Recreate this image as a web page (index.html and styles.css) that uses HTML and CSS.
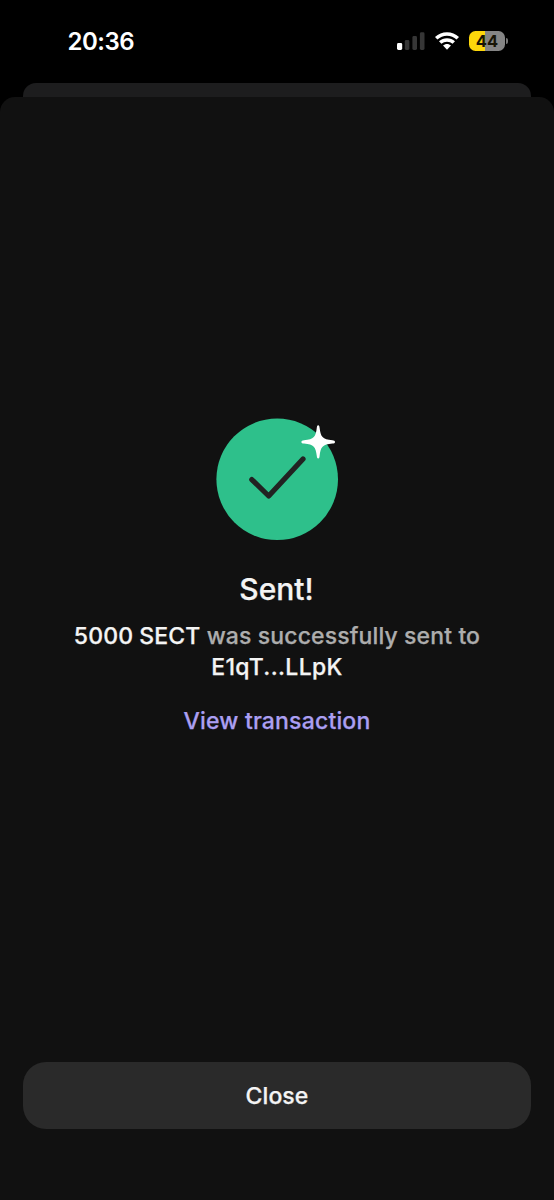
FILE: index.html
```html
<!DOCTYPE html>
<html lang="en">
<head>
<meta charset="utf-8">
<title>Sent</title>
<link rel="stylesheet" href="styles.css">
</head>
<body>
<div class="screen">
  <header class="status">
    <span class="time">20:36</span>
    <div class="indicators">
      <svg class="signal" width="28" height="18" viewBox="0 0 28 18">
        <rect x="0" y="11" width="5.2" height="7" rx="1.4" fill="#fff"/>
        <rect x="7.8" y="8" width="4.6" height="10" rx="1.4" fill="#363636"/>
        <rect x="15.4" y="4" width="4.6" height="14" rx="1.4" fill="#363636"/>
        <rect x="22.9" y="0.3" width="4.6" height="17.7" rx="1.4" fill="#363636"/>
      </svg>
      <svg class="wifi" width="24" height="18" viewBox="0 0 24 18">
        <g fill="none" stroke="#fff" stroke-width="3.5">
          <path d="M1.2 6.3C7.3 0.4 16.7 0.4 22.8 6.3"/>
          <path d="M5.2 10.6C9 7 15 7 18.8 10.6"/>
        </g>
        <path d="M8 13.6C10.3 11.5 13.7 11.5 16 13.6L12 17.8Z" fill="#fff"/>
      </svg>
      <div class="battery"><span class="level">44</span><i class="cap"></i></div>
    </div>
  </header>
  <div class="back-sheet"></div>
  <main class="sheet">
    <svg class="success" width="124" height="124" viewBox="0 0 124 124">
      <circle cx="62.2" cy="62.3" r="60.8" fill="#2ec08b"/>
      <path d="M36.8 62.6L53.7 79L88 42" fill="none" stroke="#222" stroke-width="5.2" stroke-linecap="round" stroke-linejoin="round"/>
      <path d="M103.2 8.2C104.3 8.2 104.4 9.2 104.6 10.7C105.6 19.7 107.4 22.2 117.4 23.2C119 23.4 120 23.7 120 24.9C120 26.1 119 26.4 117.4 26.6C107.4 27.6 105.6 30.1 104.6 39.1C104.4 40.6 104.3 41.6 103.2 41.6C102.1 41.6 102 40.6 101.8 39.1C100.8 30.1 99 27.6 89 26.6C87.4 26.4 86.4 26.1 86.4 24.9C86.4 23.7 87.4 23.4 89 23.2C99 22.2 100.8 19.7 101.8 10.7C102 9.2 102.1 8.2 103.2 8.2Z" fill="#fff"/>
    </svg>
    <h1 class="title">Sent!</h1>
    <p class="message"><span class="line"><b>5000 SECT</b> was successfully sent to</span><span class="line address"><b>E1qT...LLpK</b></span></p>
    <a class="link">View transaction</a>
    <button class="close">Close</button>
  </main>
</div>
</body>
</html>
```
FILE: styles.css
```css
body {
  margin: 0;
  background: #000;
  font-family: Inter, "Liberation Sans", sans-serif;
  font-weight: 500;
}
.screen {
  height: 1200px;
  display: flex;
  flex-direction: column;
  overflow: hidden;
}
.status {
  height: 83px;
  box-sizing: border-box;
  padding: 26px 46px 0 67.5px;
  display: flex;
  justify-content: space-between;
  align-items: flex-start;
}
.time {
  padding-top: 1px;
  color: #fff;
  font-size: 24px;
  font-weight: 600;
  line-height: 30px;
  letter-spacing: -0.5px;
}
.indicators {
  display: flex;
  align-items: center;
  height: 30px;
}
.wifi { margin: 0 10px; }
.battery {
  display: flex;
  align-items: center;
  gap: 1px;
}
.level {
  width: 36px;
  height: 20px;
  border-radius: 6.5px;
  background: linear-gradient(90deg, #fdd70b 44%, #858585 44%);
  color: #171405;
  font-size: 16.5px;
  font-weight: 700;
  line-height: 20px;
  text-align: center;
}
.cap {
  width: 2px;
  height: 6px;
  border-radius: 0 3px 3px 0;
  background: #777;
}
.back-sheet {
  height: 14px;
  flex: none;
  margin: 0 23px;
  border-radius: 13px 13px 0 0;
  background: #1d1d1e;
}
.sheet {
  flex: 1;
  display: flex;
  flex-direction: column;
  align-items: center;
  padding: 320px 23px 71px;
  border-radius: 15px 15px 0 0;
  background: #111;
}
.success { flex: none; }
.title {
  margin: 28px 1px 0 0;
  color: #f4f4f4;
  font-size: 30px;
  line-height: 40px;
  font-weight: 500;
  -webkit-text-stroke: 0.25px currentColor;
}
.message {
  margin: 12px 0 0;
  color: #adadad;
  font-size: 23px;
  line-height: 31px;
  letter-spacing: 0.12px;
  text-align: center;
  -webkit-text-stroke: 0.25px currentColor;
}
.line { display: block; }
.message b {
  color: #f4f4f4;
  font-weight: 500;
  -webkit-text-stroke: 0.25px currentColor;
}
.address { letter-spacing: 0.35px; }
.link {
  margin-top: 23px;
  color: #ab9ff2;
  font-size: 23px;
  line-height: 31px;
  letter-spacing: 0.18px;
  -webkit-text-stroke: 0.25px currentColor;
}
.close {
  align-self: stretch;
  height: 67px;
  margin-top: auto;
  padding: 1px 0 0;
  border: 0;
  border-radius: 23px;
  background: #2a2a2a;
  color: #f4f4f4;
  font: 500 23px/66px Inter, "Liberation Sans", sans-serif;
  letter-spacing: 0.1px;
  -webkit-text-stroke: 0.25px currentColor;
}
```
